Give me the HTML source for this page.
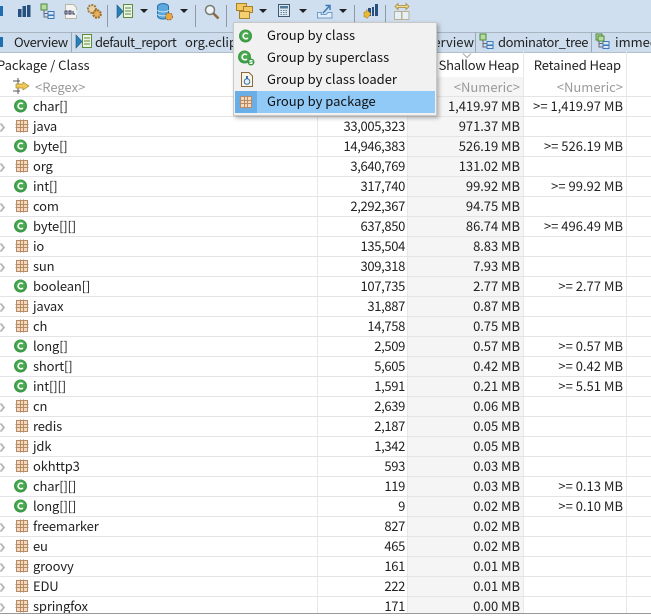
<!DOCTYPE html>
<html><head><meta charset="utf-8">
<style>
html,body{margin:0;padding:0;background:#fff}
#p{position:relative;width:651px;height:616px;overflow:hidden;background:#fff;font:13px "Noto Sans CJK SC","Liberation Sans",sans-serif;color:#222}
.a{position:absolute}
.t{position:absolute;white-space:nowrap;line-height:20px;height:20px}
.r{text-align:right}
.sep{position:absolute;width:1px;background:#8f9aa6;top:5px;height:22px}
.arr{position:absolute;width:0;height:0;border-left:4px solid transparent;border-right:4px solid transparent;border-top:4px solid #222;top:9px}
.vl{position:absolute;top:52px;width:1px;height:561px;background:#e8e8e8}
svg.i{position:absolute;overflow:visible}
.w{position:absolute;left:0;width:651px;height:20px;border-top:1px solid #e4e4e4;box-sizing:border-box}
.w span{position:absolute;top:-1px;line-height:20px;white-space:nowrap}
.w .nm{left:33px;letter-spacing:-.15px}
.w .ob{left:317px;width:88px;text-align:right;letter-spacing:-.35px}
.w .sh{left:407px;width:113px;text-align:right;letter-spacing:-.05px}
.w .re{left:523px;width:100px;text-align:right}
.w svg{position:absolute;overflow:visible}
.ic{left:14px;top:2px;width:14px;height:14px}
.ip{left:15px;top:2px;width:14px;height:14px}
.ch{left:0;top:6px;width:5px;height:9px}
</style></head><body><div id="p">
<svg width="0" height="0" style="position:absolute"><defs>
<g id="c"><circle cx="6.500" cy="7" r="6.500" fill="#3c9a45"/><circle cx="6.500" cy="6.500" r="5" fill="#4aaa52"/><path d="M8.900 5A2.800 2.800 0 1 0 8.900 9" fill="none" stroke="#fff" stroke-width="1.600"/></g>
<g id="pk"><rect x="1.500" y="1.500" width="11" height="11" fill="#f6d9bd" stroke="#b58b68"/><path d="M5.500 .5V13.500M8.500 .5V13.500M.5 5.500H13.500M.5 8.500H13.500" stroke="#b58b68" stroke-width="1" fill="none"/></g>
<g id="chv"><path d="M.5 .5L4 4.500L.5 8.500" fill="none" stroke="#b5b5b5" stroke-width="1.800"/></g>
<g id="rep"><path d="M1 2V15L7 8.500Z" fill="#2a80b9" stroke="#14597f" stroke-width=".6"/><rect x="7.500" y="1.500" width="9" height="13" fill="#eef4e6" stroke="#5c8d3c"/><path d="M9 5h6M9 8h6M9 11h6" stroke="#5c8d3c"/></g>
<g id="tree"><rect x="1" y="1" width="6" height="6" fill="#b8dba0" stroke="#4b8a3a"/><path d="M4 7V14H8M4 10.500H8" stroke="#667" fill="none"/><rect x="8" y="8.500" width="6" height="3.500" fill="#d8e8f8" stroke="#3d78b8"/><rect x="8" y="12.500" width="6" height="3" fill="#d8e8f8" stroke="#3d78b8"/></g>
</defs></svg>

<!-- toolbar -->
<div class="a" style="left:0;top:0;width:651px;height:32px;background:#cfdfef"></div>
<!-- tab bar -->
<div class="a" style="left:0;top:32px;width:651px;height:21px;background:#cddded;border-top:1px solid #a8b4c0;border-bottom:1px solid #b4bec8;box-sizing:border-box"></div>
<div class="a" style="left:71px;top:32px;width:1px;height:20px;background:#9aa8b6"></div>
<div class="a" style="left:591px;top:32px;width:1px;height:20px;background:#9aa8b6"></div>
<div class="a" style="left:475px;top:32px;width:1px;height:20px;background:#9aa8b6"></div>

<!-- toolbar icons -->
<div class="a" style="left:0;top:6px;width:3px;height:10px;background:#1f6fb0"></div>
<svg class="i" style="left:18px;top:5px" width="14" height="14"><path d="M0 4h3.500v8H0zM4.500 1H8v11H4.500zM9 0h3.500v12H9z" fill="#27507f"/></svg>
<svg class="i" style="left:40px;top:3px" width="17" height="17"><use href="#tree"/></svg>
<svg class="i" style="left:64px;top:4px" width="14" height="15"><path d="M1.500.5h8l3 3v11h-11z" fill="#f4f4f0" stroke="#b8b4a8"/><rect x="0" y="6" width="13" height="5" fill="#e8ecf0"/><path d="M1 7v3h2V7zM5 7v3h2V7zM9 7v3h2" fill="none" stroke="#335" stroke-width="1"/></svg>
<svg class="i" style="left:86px;top:3px" width="16" height="16"><circle cx="6" cy="6" r="4" fill="#e8d2a8" stroke="#a07a40" stroke-width="2" stroke-dasharray="2 1"/><circle cx="11" cy="11" r="3.800" fill="#e4b060" stroke="#a06a20" stroke-width="2" stroke-dasharray="2 1"/></svg>
<div class="sep" style="left:107px"></div>
<svg class="i" style="left:116px;top:3px" width="18" height="17"><use href="#rep"/></svg>
<div class="arr" style="left:140px"></div>
<svg class="i" style="left:156px;top:3px" width="18" height="18"><ellipse cx="7" cy="3.500" rx="5.500" ry="3" fill="#5aa8de" stroke="#2a70a8"/><path d="M1.500 3.500V13c0 1.700 2.500 3 5.500 3s5.500-1.300 5.500-3V3.500" fill="#5aa8de" stroke="#2a70a8"/><path d="M1.500 7c1 2.500 10 2.500 11 0M1.500 11c1 2.500 10 2.500 11 0" fill="none" stroke="#d8ecf8"/><circle cx="13" cy="13.500" r="3.500" fill="#e8a848" stroke="#9a6a20" stroke-dasharray="2 1"/></svg>
<div class="arr" style="left:180px"></div>
<div class="sep" style="left:195px"></div>
<svg class="i" style="left:204px;top:4px" width="16" height="16"><circle cx="6" cy="6" r="4.500" fill="#eef4f8" stroke="#7a7a70" stroke-width="1.500"/><path d="M9.500 9.500L14.500 14.500" stroke="#8a6a3a" stroke-width="2.500"/></svg>
<div class="sep" style="left:226px"></div>
<svg class="i" style="left:236px;top:2px" width="18" height="17"><rect x=".5" y="1.500" width="10" height="7" fill="#f4c860" stroke="#a8802a"/><rect x="7.500" y="4.500" width="9" height="6" fill="#f4c860" stroke="#a8802a"/><rect x="3.500" y="9.500" width="10" height="7" fill="#f6d070" stroke="#a8802a"/></svg>
<div class="arr" style="left:259px"></div>
<svg class="i" style="left:278px;top:4px" width="14" height="15"><rect x=".5" y=".5" width="11" height="12" fill="#dfe7ee" stroke="#3f5a70"/><rect x="2" y="2" width="8" height="2.500" fill="#4f7a9a"/><path d="M2.500 6.500h7M2.500 8.500h7M2.500 10.500h7" stroke="#5f8aa8" stroke-dasharray="1.500 1"/></svg>
<div class="arr" style="left:299px"></div>
<svg class="i" style="left:316px;top:4px" width="18" height="15"><path d="M1.500 8.500V14H16V8.500H12L10 10.500H5L5.500 8.500Z" fill="#e4eef8" stroke="#6a9ccc"/><path d="M7 9L13 2.500M9.500 1.500H14V6" fill="none" stroke="#3a78b8" stroke-width="1.500"/></svg>
<div class="arr" style="left:339px"></div>
<div class="sep" style="left:354px"></div>
<svg class="i" style="left:363px;top:4px" width="16" height="16"><path d="M5 4h3v8H5zM9 3h2v9H9zM12 0h3v12h-3z" fill="#27507f"/><path d="M1 8h2.500V5.500L8 10l-4 4.500L3 13H1z" fill="#e8b838" stroke="#9a7420" stroke-width=".5"/></svg>
<div class="sep" style="left:385px"></div>
<svg class="i" style="left:394px;top:2px" width="16" height="18"><path d="M1 4.500L4 1.500V3.500H12V1.500L15 4.500L12 7.500V5.500H4V7.500Z" fill="#f0d890" stroke="#a88a3a" stroke-width=".8"/><rect x=".5" y="9.500" width="7" height="8" fill="#e6f0f8" stroke="#b8b090"/><rect x="8" y="9.500" width="7" height="8" fill="#e6f0f8" stroke="#b8b090"/></svg>

<!-- tabs -->
<div class="a" style="left:0;top:37px;width:3px;height:10px;background:#1f6fb0"></div>
<div class="t" style="left:14px;top:32px;letter-spacing:-.4px">Overview</div>
<svg class="i" style="left:75px;top:33px" width="18" height="17"><use href="#rep"/></svg>
<div class="t" style="left:95px;top:32px;letter-spacing:-.5px">default_report</div>
<div class="t" style="left:185px;top:32px;letter-spacing:-.1px">org.eclipse</div>
<div class="t" style="left:438px;top:32px;width:36px;overflow:hidden;direction:rtl;text-align:right">erview</div>
<svg class="i" style="left:479px;top:33px" width="17" height="17"><use href="#tree"/></svg>
<div class="t" style="left:498px;top:32px;letter-spacing:-.4px">dominator_tree</div>
<svg class="i" style="left:595px;top:33px" width="17" height="17"><use href="#tree"/><rect x="3" y="3" width="6" height="5" fill="#b8dba0" stroke="#4b8a3a"/></svg>
<div class="t" style="left:615px;top:32px">immediate</div>

<!-- grid -->
<div class="a" style="left:407px;top:53px;width:116px;height:560px;background:#f5f5f5"></div>
<div class="a" style="left:407px;top:53px;width:116px;height:24px;background:#fff"></div>
<div class="vl" style="left:317px"></div><div class="vl" style="left:407px"></div><div class="vl" style="left:523px"></div><div class="vl" style="left:626px"></div>
<div class="a" style="left:0;top:53px;width:317px;height:24px;background:#fff"></div>
<div class="t" style="left:-3px;top:55px">Package / Class</div>
<div class="t r" style="left:407px;width:112px;top:55px;letter-spacing:-.25px">Shallow Heap</div>
<div class="t r" style="left:523px;width:98px;top:55px;letter-spacing:-.1px">Retained Heap</div>
<svg class="i" style="left:463px;top:53px" width="9" height="5"><path d="M0 .5L4 4.500L8 .5" fill="none" stroke="#aaa"/></svg>
<svg class="i" style="left:13px;top:78px" width="17" height="16"><path d="M0 3H7M5 0V6M0 13H7M5 10V16" stroke="#555" fill="none"/><path d="M3 6H10V4L16 8L10 12V10H3Z" fill="#f0c858" stroke="#a88a2a" stroke-width=".7"/></svg>
<div class="t" style="left:35px;top:77px;color:#999">&lt;Regex&gt;</div>
<div class="t r" style="left:407px;width:113px;top:77px;color:#999">&lt;Numeric&gt;</div>
<div class="t r" style="left:523px;width:100px;top:77px;color:#999">&lt;Numeric&gt;</div>

<div class="w" style="top:96px"><svg class="ic"><use href="#c"/></svg><span class="nm">char[]</span><span class="sh">1,419.97 MB</span><span class="re">&gt;= 1,419.97 MB</span></div>
<div class="w" style="top:116px"><svg class="ch"><use href="#chv"/></svg><svg class="ip"><use href="#pk"/></svg><span class="nm">java</span><span class="ob">33,005,323</span><span class="sh">971.37 MB</span></div>
<div class="w" style="top:136px"><svg class="ic"><use href="#c"/></svg><span class="nm">byte[]</span><span class="ob">14,946,383</span><span class="sh">526.19 MB</span><span class="re">&gt;= 526.19 MB</span></div>
<div class="w" style="top:156px"><svg class="ch"><use href="#chv"/></svg><svg class="ip"><use href="#pk"/></svg><span class="nm">org</span><span class="ob">3,640,769</span><span class="sh">131.02 MB</span></div>
<div class="w" style="top:176px"><svg class="ic"><use href="#c"/></svg><span class="nm">int[]</span><span class="ob">317,740</span><span class="sh">99.92 MB</span><span class="re">&gt;= 99.92 MB</span></div>
<div class="w" style="top:196px"><svg class="ch"><use href="#chv"/></svg><svg class="ip"><use href="#pk"/></svg><span class="nm">com</span><span class="ob">2,292,367</span><span class="sh">94.75 MB</span></div>
<div class="w" style="top:216px"><svg class="ic"><use href="#c"/></svg><span class="nm">byte[][]</span><span class="ob">637,850</span><span class="sh">86.74 MB</span><span class="re">&gt;= 496.49 MB</span></div>
<div class="w" style="top:236px"><svg class="ch"><use href="#chv"/></svg><svg class="ip"><use href="#pk"/></svg><span class="nm">io</span><span class="ob">135,504</span><span class="sh">8.83 MB</span></div>
<div class="w" style="top:256px"><svg class="ch"><use href="#chv"/></svg><svg class="ip"><use href="#pk"/></svg><span class="nm">sun</span><span class="ob">309,318</span><span class="sh">7.93 MB</span></div>
<div class="w" style="top:276px"><svg class="ic"><use href="#c"/></svg><span class="nm">boolean[]</span><span class="ob">107,735</span><span class="sh">2.77 MB</span><span class="re">&gt;= 2.77 MB</span></div>
<div class="w" style="top:296px"><svg class="ch"><use href="#chv"/></svg><svg class="ip"><use href="#pk"/></svg><span class="nm">javax</span><span class="ob">31,887</span><span class="sh">0.87 MB</span></div>
<div class="w" style="top:316px"><svg class="ch"><use href="#chv"/></svg><svg class="ip"><use href="#pk"/></svg><span class="nm">ch</span><span class="ob">14,758</span><span class="sh">0.75 MB</span></div>
<div class="w" style="top:336px"><svg class="ic"><use href="#c"/></svg><span class="nm">long[]</span><span class="ob">2,509</span><span class="sh">0.57 MB</span><span class="re">&gt;= 0.57 MB</span></div>
<div class="w" style="top:356px"><svg class="ic"><use href="#c"/></svg><span class="nm">short[]</span><span class="ob">5,605</span><span class="sh">0.42 MB</span><span class="re">&gt;= 0.42 MB</span></div>
<div class="w" style="top:376px"><svg class="ic"><use href="#c"/></svg><span class="nm">int[][]</span><span class="ob">1,591</span><span class="sh">0.21 MB</span><span class="re">&gt;= 5.51 MB</span></div>
<div class="w" style="top:396px"><svg class="ch"><use href="#chv"/></svg><svg class="ip"><use href="#pk"/></svg><span class="nm">cn</span><span class="ob">2,639</span><span class="sh">0.06 MB</span></div>
<div class="w" style="top:416px"><svg class="ch"><use href="#chv"/></svg><svg class="ip"><use href="#pk"/></svg><span class="nm">redis</span><span class="ob">2,187</span><span class="sh">0.05 MB</span></div>
<div class="w" style="top:436px"><svg class="ch"><use href="#chv"/></svg><svg class="ip"><use href="#pk"/></svg><span class="nm">jdk</span><span class="ob">1,342</span><span class="sh">0.05 MB</span></div>
<div class="w" style="top:456px"><svg class="ch"><use href="#chv"/></svg><svg class="ip"><use href="#pk"/></svg><span class="nm">okhttp3</span><span class="ob">593</span><span class="sh">0.03 MB</span></div>
<div class="w" style="top:476px"><svg class="ic"><use href="#c"/></svg><span class="nm">char[][]</span><span class="ob">119</span><span class="sh">0.03 MB</span><span class="re">&gt;= 0.13 MB</span></div>
<div class="w" style="top:496px"><svg class="ic"><use href="#c"/></svg><span class="nm">long[][]</span><span class="ob">9</span><span class="sh">0.02 MB</span><span class="re">&gt;= 0.10 MB</span></div>
<div class="w" style="top:516px"><svg class="ch"><use href="#chv"/></svg><svg class="ip"><use href="#pk"/></svg><span class="nm">freemarker</span><span class="ob">827</span><span class="sh">0.02 MB</span></div>
<div class="w" style="top:536px"><svg class="ch"><use href="#chv"/></svg><svg class="ip"><use href="#pk"/></svg><span class="nm">eu</span><span class="ob">465</span><span class="sh">0.02 MB</span></div>
<div class="w" style="top:556px"><svg class="ch"><use href="#chv"/></svg><svg class="ip"><use href="#pk"/></svg><span class="nm">groovy</span><span class="ob">161</span><span class="sh">0.01 MB</span></div>
<div class="w" style="top:576px"><svg class="ch"><use href="#chv"/></svg><svg class="ip"><use href="#pk"/></svg><span class="nm">EDU</span><span class="ob">222</span><span class="sh">0.01 MB</span></div>
<div class="w" style="top:596px"><svg class="ch"><use href="#chv"/></svg><svg class="ip"><use href="#pk"/></svg><span class="nm">springfox</span><span class="ob">171</span><span class="sh">0.00 MB</span></div>
<div class="a" style="left:0;top:613px;width:651px;height:1px;background:#999"></div>

<!-- menu -->
<div class="a" style="left:233px;top:22px;width:204px;height:94px;background:#f1f1f1;border:1px solid #c8c8c8;box-sizing:border-box;box-shadow:2px 2px 4px rgba(0,0,0,.3)"></div>
<div class="a" style="left:235px;top:91px;width:200px;height:22px;background:#91c9f7"></div>
<div class="a" style="left:235px;top:91px;width:22px;height:22px;background:#6aaee8"></div>
<svg class="i" style="left:239px;top:29px" width="14" height="14"><use href="#c"/></svg>
<svg class="i" style="left:238px;top:50px" width="18" height="16"><use href="#c"/><circle cx="13" cy="12" r="3.500" fill="#3c9a45"/><path d="M14.500 10.500H12V12H14V13.500H11.500" fill="none" stroke="#fff"/></svg>
<svg class="i" style="left:241px;top:72px" width="12" height="15"><path d="M.5 .5H8L11.500 4V14.500H.5Z" fill="#f8f4e8" stroke="#8a6a3a"/><circle cx="6" cy="9.500" r="2.800" fill="#e8f0f8" stroke="#3a70a8"/><path d="M5 4h2v3H5z" fill="#3a70a8"/></svg>
<svg class="i" style="left:239px;top:95px" width="14" height="14"><use href="#pk"/></svg>
<div class="t" style="left:267px;top:25px;color:#111">Group by class</div>
<div class="t" style="left:267px;top:47px;color:#111">Group by superclass</div>
<div class="t" style="left:267px;top:69px;color:#111">Group by class loader</div>
<div class="t" style="left:267px;top:91px;color:#111">Group by package</div>
</div></body></html>
